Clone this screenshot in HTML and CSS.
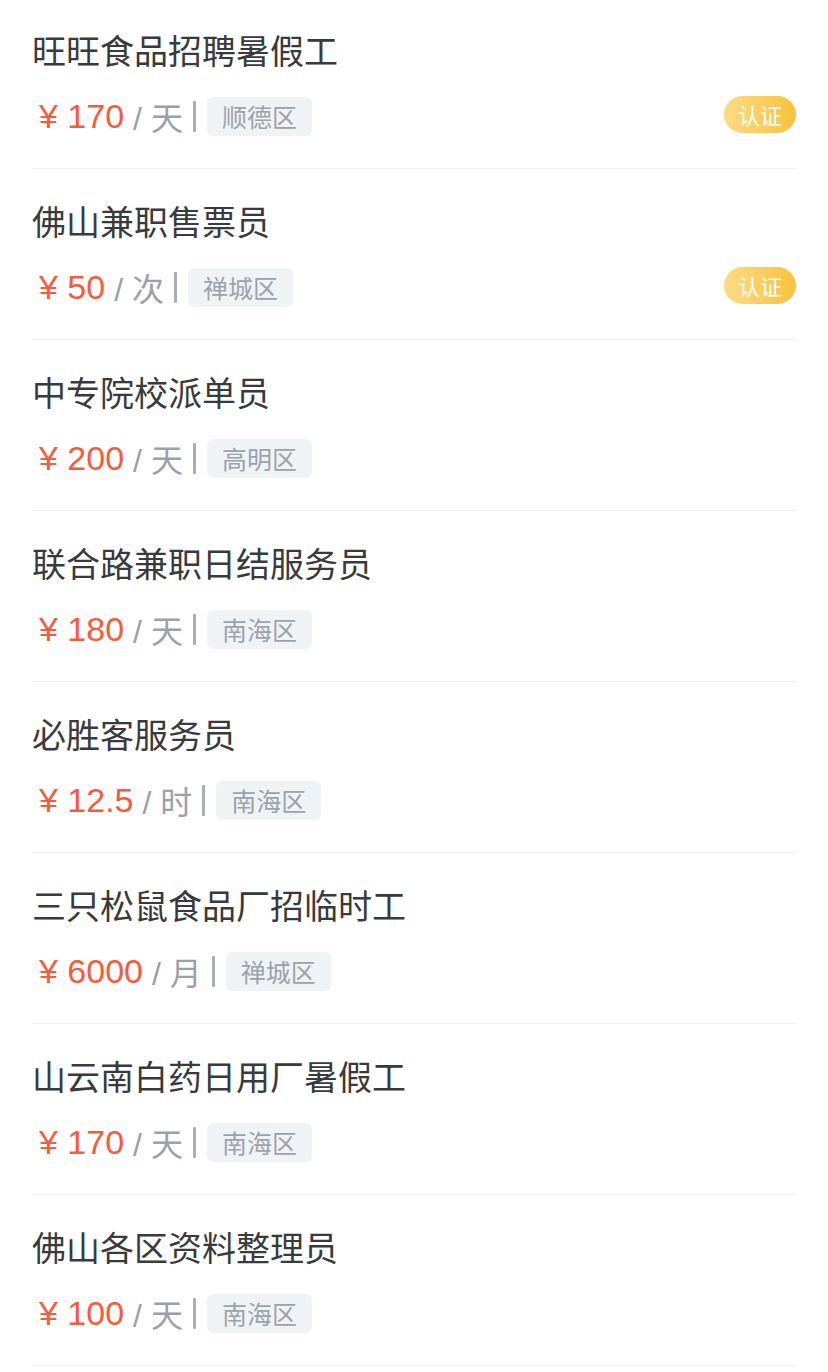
FILE: index.html
```html
<!DOCTYPE html>
<html lang="zh-CN">
<head>
<meta charset="utf-8">
<title>兼职列表</title>
<link rel="stylesheet" href="styles.css">
</head>
<body>
<ul class="job-list">
  <li class="job">
    <div class="job-title">旺旺食品招聘暑假工</div>
    <div class="job-meta">
      <span class="price">¥ 170</span><span class="unit">/ 天</span><span class="sep"></span><span class="area">顺德区</span>
      <span class="badge">认证</span>
    </div>
  </li>
  <li class="job">
    <div class="job-title">佛山兼职售票员</div>
    <div class="job-meta">
      <span class="price">¥ 50</span><span class="unit">/ 次</span><span class="sep"></span><span class="area">禅城区</span>
      <span class="badge">认证</span>
    </div>
  </li>
  <li class="job">
    <div class="job-title">中专院校派单员</div>
    <div class="job-meta">
      <span class="price">¥ 200</span><span class="unit">/ 天</span><span class="sep"></span><span class="area">高明区</span>
    </div>
  </li>
  <li class="job">
    <div class="job-title">联合路兼职日结服务员</div>
    <div class="job-meta">
      <span class="price">¥ 180</span><span class="unit">/ 天</span><span class="sep"></span><span class="area">南海区</span>
    </div>
  </li>
  <li class="job">
    <div class="job-title">必胜客服务员</div>
    <div class="job-meta">
      <span class="price">¥ 12.5</span><span class="unit">/ 时</span><span class="sep"></span><span class="area">南海区</span>
    </div>
  </li>
  <li class="job">
    <div class="job-title">三只松鼠食品厂招临时工</div>
    <div class="job-meta">
      <span class="price">¥ 6000</span><span class="unit">/ 月</span><span class="sep"></span><span class="area">禅城区</span>
    </div>
  </li>
  <li class="job">
    <div class="job-title">山云南白药日用厂暑假工</div>
    <div class="job-meta">
      <span class="price">¥ 170</span><span class="unit">/ 天</span><span class="sep"></span><span class="area">南海区</span>
    </div>
  </li>
  <li class="job">
    <div class="job-title">佛山各区资料整理员</div>
    <div class="job-meta">
      <span class="price">¥ 100</span><span class="unit">/ 天</span><span class="sep"></span><span class="area">南海区</span>
    </div>
  </li>
</ul>
</body>
</html>
```
FILE: styles.css
```css
* { box-sizing: border-box; }
html, body {
  margin: 0;
  padding: 0;
  background: #ffffff;
}
body {
  font-family: "Liberation Sans", "Noto Sans CJK SC", sans-serif;
  -webkit-font-smoothing: antialiased;
}
.job-list {
  list-style: none;
  margin: 0;
  padding: 0 32px;
}
.job {
  height: 171px;
  padding-top: 31px;
  border-bottom: 1px solid #eef0f4;
}
.job:first-child {
  height: 169px;
  padding-top: 29px;
}
.job-title {
  font-family: "Noto Sans CJK SC", sans-serif;
  font-size: 34px;
  line-height: 42px;
  color: #383a3c;
}
.job-meta {
  display: flex;
  align-items: center;
  height: 40px;
  margin-top: 25px;
  white-space: pre;
}
.price {
  color: #fa5a3c;
  font-size: 34px;
  margin-left: 7px;
}
.unit {
  color: #9aa1a8;
  margin-left: 9px;
  font-size: 32px;
}
.sep {
  display: inline-block;
  width: 3px;
  height: 31px;
  margin-left: 10px;
  border-radius: 1px;
  background: #a7aeb4;
}
.area {
  margin-left: 11px;
  height: 39px;
  line-height: 39px;
  padding: 0 15px;
  border-radius: 6px;
  background: #f0f3f6;
  color: #9ba2a9;
  font-family: "Noto Sans CJK SC", sans-serif;
  font-size: 25px;
}
.badge {
  margin-left: auto;
  margin-top: -3px;
  width: 72px;
  height: 37px;
  line-height: 37px;
  border-radius: 19px;
  text-align: center;
  color: #ffffff;
  font-family: "Noto Sans CJK SC", sans-serif;
  font-size: 22px;
  background: linear-gradient(90deg, #fcdb85 0%, #f8c33d 100%);
}
```
